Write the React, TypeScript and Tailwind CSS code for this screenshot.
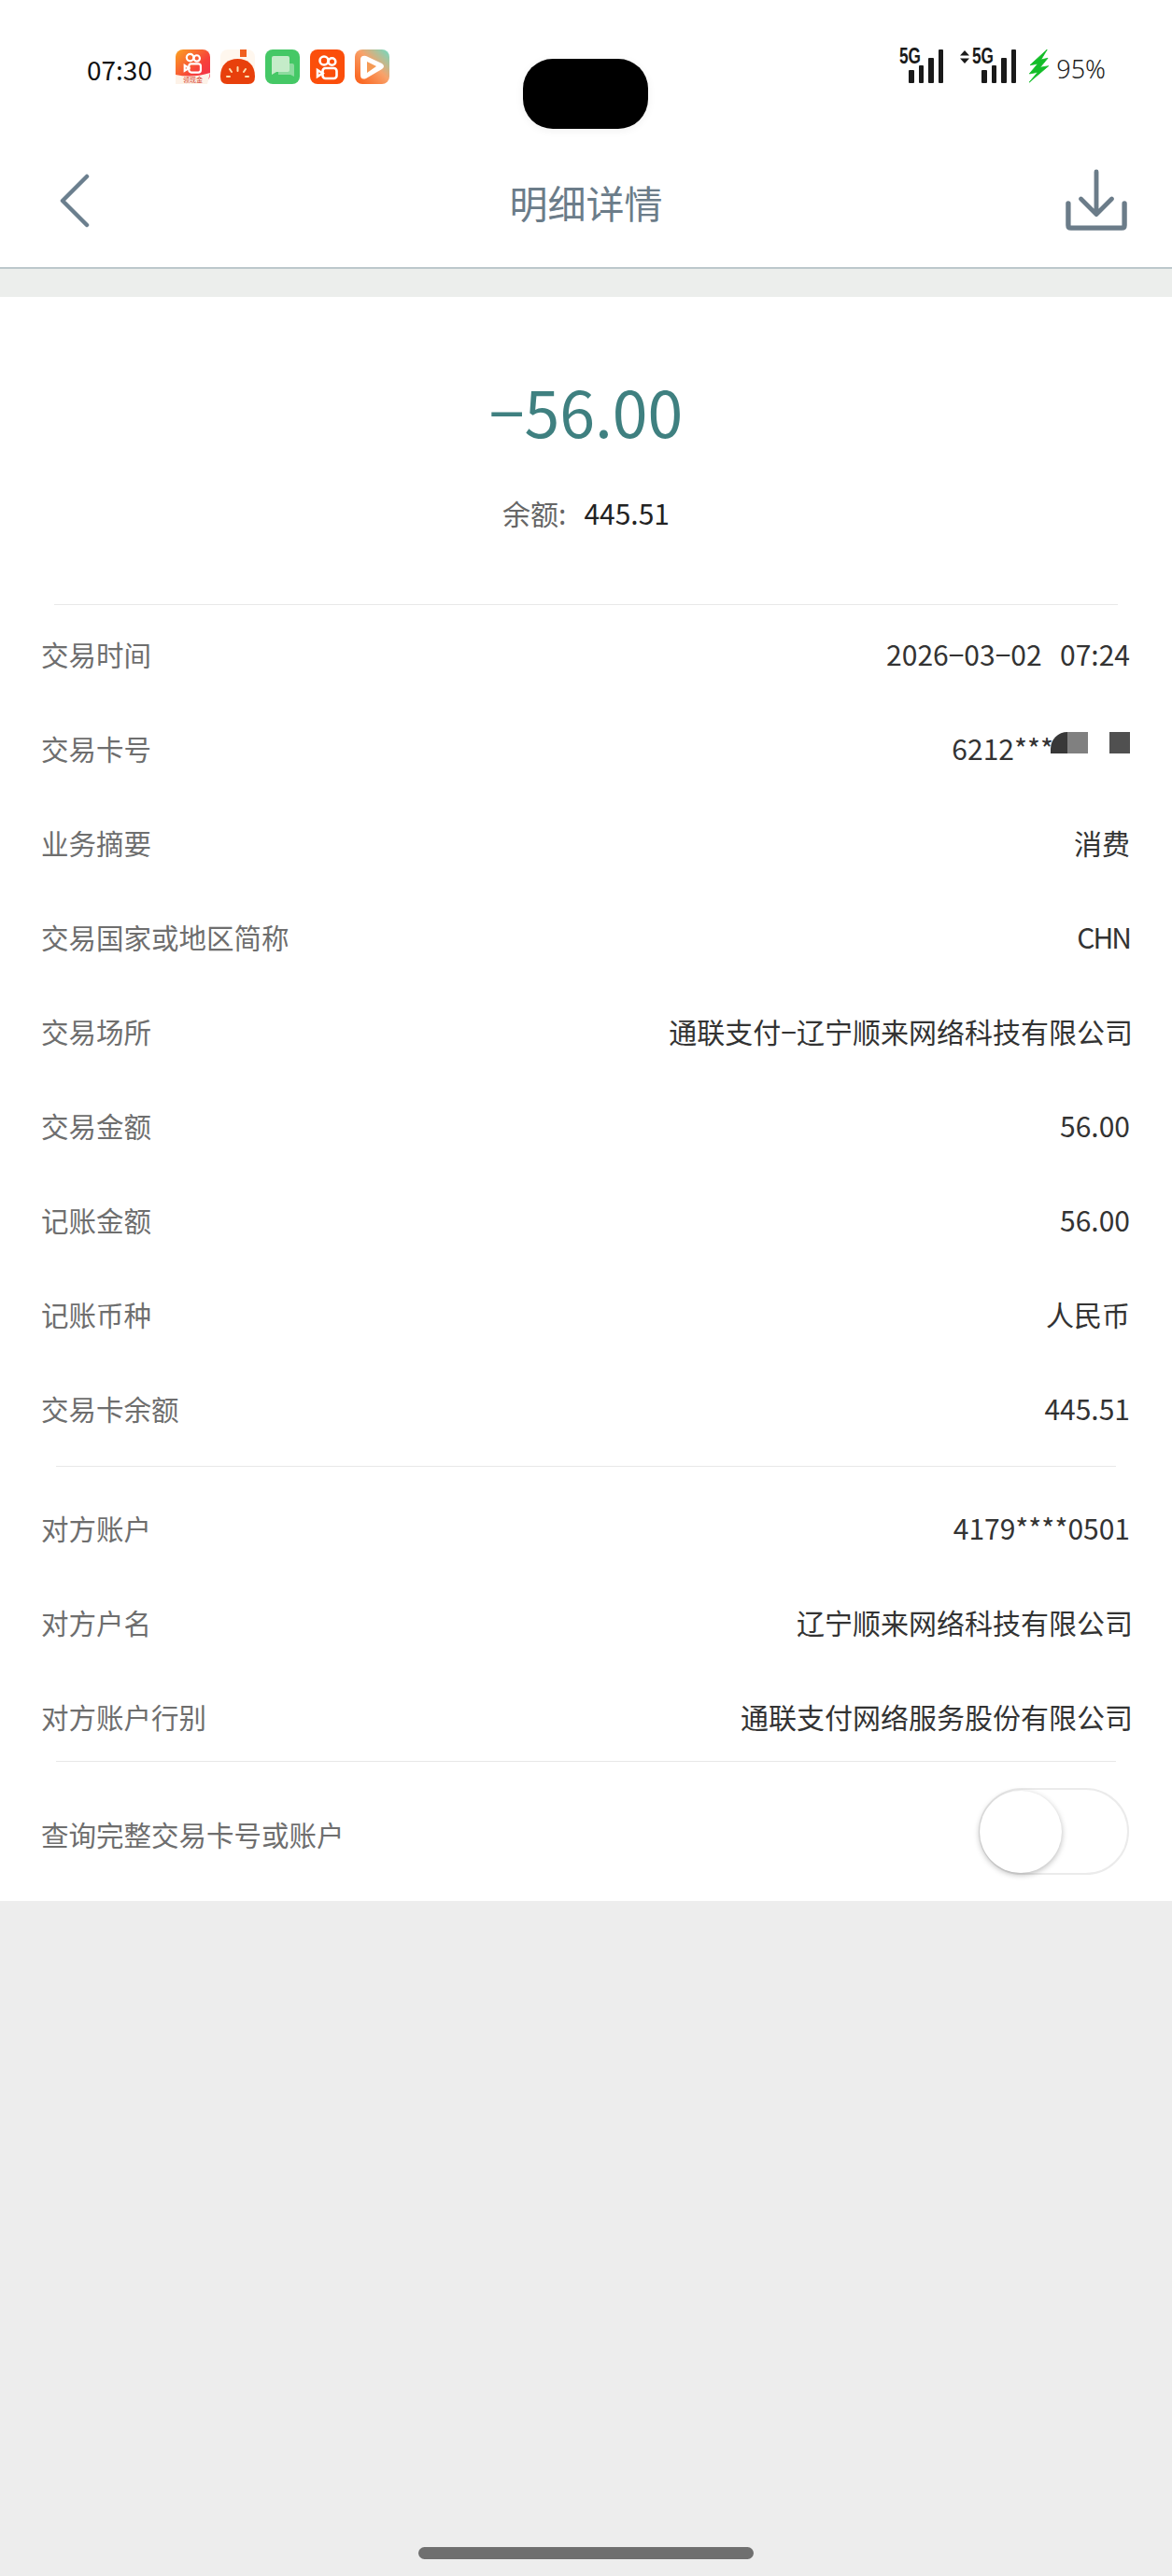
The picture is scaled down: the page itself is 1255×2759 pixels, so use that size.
import type { ReactNode } from 'react'

const CJK = 'font-["Noto_Sans_CJK_SC","Noto_Sans",sans-serif]'

const ROWS_TOP: [string, ReactNode][] = [
  ['交易时间', '2026−03−02  \u200907:24'],
  ['交易卡号', <CardNo key="card" />],
  ['业务摘要', '消费'],
  ['交易国家或地区简称', <span key="chn" className="tracking-[-2px]">CHN</span>],
  ['交易场所', '通联支付−辽宁顺来网络科技有限公司'],
  ['交易金额', '56.00'],
  ['记账金额', '56.00'],
  ['记账币种', '人民币'],
  ['交易卡余额', '445.51'],
]

const ROWS_BOTTOM: [string, string][] = [
  ['对方账户', '4179****0501'],
  ['对方户名', '辽宁顺来网络科技有限公司'],
  ['对方账户行别', '通联支付网络服务股份有限公司'],
]

function CardNo() {
  return (
    <div className="flex items-start h-[101px]">
      <span className="mt-[29px] leading-[42px] -mr-[3px]">6212***</span>
      <div className="mt-[33px] w-[18px] h-[23px] bg-[#383838] rounded-tl-[18px]" />
      <div className="mt-[33px] w-[22px] h-[23px] bg-[#808080]" />
      <div className="mt-[33px] ml-[23px] w-[22px] h-[23px] bg-[#505050]" />
    </div>
  )
}

function Row({ label, value }: { label: string; value: ReactNode }) {
  // company names sit a little further right than the numbers in the reference
  const company = typeof value === 'string' && value.endsWith('公司')
  return (
    <div className="flex items-center justify-between h-[101px] pl-[44px] pr-[45px]">
      <span className="text-[29.500px] text-[#6e6e6e]">{label}</span>
      <span className={`text-[30px] text-[#333333] whitespace-pre ${company ? '-mr-[3px]' : ''}`}>{value}</span>
    </div>
  )
}

function CameraGlyph() {
  return (
    <g fill="none" stroke="#fff" strokeWidth="2.600">
      <circle cx="15" cy="12" r="4.500" />
      <circle cx="23.500" cy="13" r="3.800" />
      <rect x="13.500" y="20" width="15" height="11" rx="3" />
      <path d="M13.500 25.500 8 22v7z" />
    </g>
  )
}

function AppIcons() {
  return (
    <div className="flex gap-[11px] ml-[25px]">
      <svg width="37" height="37" viewBox="0 0 37 37">
        <defs>
          <linearGradient id="a" x1="0" y1="0" x2="1" y2="1">
            <stop offset="0" stopColor="#fba321" />
            <stop offset="0.6" stopColor="#f7413a" />
            <stop offset="1" stopColor="#f02d50" />
          </linearGradient>
        </defs>
        <rect width="37" height="35" rx="8" fill="url(#a)" />
        <g transform="translate(3 -1.500) scale(.84)">
          <CameraGlyph />
        </g>
        <path d="M0 27q18 4 37-2l-3 12H0z" fill="#fdf2e8" />
        <text x="8" y="34.500" fontSize="7" fill="#d8402c">领现金</text>
      </svg>
      <svg width="37" height="37" viewBox="0 0 37 37">
        <rect width="37" height="37" fill="#fff7ee" rx="8" />
        <rect x="21" y="0" width="7" height="8" fill="#f0601f" />
        <path d="M0 29C0 16 8 10 18.500 10S37 16 37 29q0 8-7 8H7q-7 0-7-8" fill="#e8400c" />
        <path d="M18.500 19v4M10 21l2 3M27 21l-2 3M7 29h3M27 29h3" stroke="#fde0b0" strokeWidth="2" strokeLinecap="round" />
      </svg>
      <svg width="37" height="37" viewBox="0 0 37 37">
        <rect width="37" height="37" rx="8" fill="#45c866" />
        <path d="M14 15h15q2 0 2 2v12l-4-2H14z" fill="#8ddb9f" />
        <path d="M9 7h15q2 0 2 2v13q0 2-2 2H12l-5 3V9q0-2 2-2" fill="#c5ecc9" />
      </svg>
      <svg width="37" height="37" viewBox="0 0 37 37">
        <rect width="37" height="37" rx="8" fill="#fb4e0b" />
        <CameraGlyph />
      </svg>
      <svg width="37" height="37" viewBox="0 0 37 37">
        <defs>
          <linearGradient id="b" x1="0" y1="1" x2="1" y2="0">
            <stop offset="0" stopColor="#fb5a12" />
            <stop offset="0.55" stopColor="#f8a26a" />
            <stop offset="1" stopColor="#6ddcc4" />
          </linearGradient>
        </defs>
        <rect width="37" height="37" rx="8" fill="url(#b)" />
        <path d="M6 11q0-5 6-4l17 8q4 3 0 6L12 31q-6 2-6-4z" fill="#fff" />
        <path d="M13 13l10 5-10 7z" fill="#f59a55" />
      </svg>
    </div>
  )
}

function Signal({ arrows }: { arrows?: boolean }) {
  return (
    <div className="flex items-start">
      {arrows && (
        <svg width="10" height="14" viewBox="0 0 10 14" className="mt-[1px] mr-[3px]">
          <path d="M5 0l5 5.500H0zM5 14l5-5.500H0z" fill="#1a1a1a" />
        </svg>
      )}
      <div className="relative w-[47px] h-[36px]">
        <span className="absolute left-0 top-[-5px] origin-left scale-x-75 text-[23px] font-bold leading-[24px] text-[#1a1a1a] font-['Liberation_Sans',sans-serif]">5G</span>
        <div className="absolute bottom-0 right-0 flex items-end gap-[5px]">
          <div className="w-[5.500px] h-[14px] rounded-[1px] bg-[#1a1a1a]" />
          <div className="w-[5.500px] h-[19px] rounded-[1px] bg-[#1a1a1a]" />
          <div className="w-[5.500px] h-[27px] rounded-[1px] bg-[#1a1a1a]" />
          <div className="w-[5.500px] h-[36px] rounded-[1px] bg-[#1a1a1a]" />
        </div>
      </div>
    </div>
  )
}

export default function App() {
  return (
    <div className={`relative h-[2759px] flex flex-col bg-[#ededed] ${CJK}`}>
      {/* camera cutout */}
      <div className="absolute left-[560px] top-[63px] w-[134px] h-[75px] rounded-[32px] bg-black shadow-[0_2px_10px_rgba(0,0,0,0.06)]" />

      <div className="bg-white border-b-2 border-[#bcc8cc]">
        <div className="flex items-start justify-between h-[164px] pt-[53px] pl-[93px] pr-[71px]">
          <div className="flex items-start">
            <span className="text-[28px] leading-[46px] -mt-[2px] text-[#111111]">07:30</span>
            <AppIcons />
          </div>
          <div className="flex items-end h-[36px]">
            <Signal />
            <div className="ml-[18px]">
              <Signal arrows />
            </div>
            <svg width="21" height="36" viewBox="0 0 21 36" className="ml-[14px]">
              <path d="M19.300 0 1 16.700l8.300-1.400L.3 26l9-1.700L0 35.300l20.700-17.600-9 1.600L20 9.300 12.700 11z" fill="#12bd27" stroke="#12bd27" strokeWidth="0.800" />
            </svg>
            <span className="text-[27px] leading-[40px] text-[#222222] font-['Noto_Sans',sans-serif] font-light ml-[8px] -mb-[5px]">95%</span>
          </div>
        </div>
        <div className="relative flex items-center justify-center h-[122px] pb-[17px]">
          <svg width="36" height="58" viewBox="0 0 36 58" className="absolute left-[62px] top-[22px]" fill="none">
            <path d="M31 3 5 29l26 26" stroke="#6b7f8e" strokeWidth="4.500" strokeLinecap="round" strokeLinejoin="round" />
          </svg>
          <span className="text-[41px] text-[#6b7c89]">明细详情</span>
          <svg width="66" height="66" viewBox="0 0 68 68" className="absolute right-[48px] top-[17px]" fill="none" stroke="#6b7c89" strokeLinecap="round" strokeLinejoin="round">
            <path d="M34 3v46M17 33l17 17 17-17" strokeWidth="5" />
            <path d="M3 38v24q0 3 3 3h56q3 0 3-3V38" strokeWidth="5.500" />
          </svg>
        </div>
      </div>

      <div className="h-[30px] bg-[#eceeec]" />

      <div className="bg-white">
        <div className="flex flex-col items-center h-[329px] pt-[75px]">
          <div className="text-[68px] leading-[94px] text-[#3f8080]">−56.00</div>
          <div className="flex gap-[19px] mt-[41px] text-[30px] leading-[42px]">
            <span className="text-[#666666]">余额:</span>
            <span className="text-[#222222]">445.51</span>
          </div>
        </div>
        <div className="mx-[58px] h-[1px] bg-[#e8e8e8]" />
        <div className="pt-[2px]">
          {ROWS_TOP.map(([label, value]) => (
            <Row key={label} label={label} value={value} />
          ))}
        </div>
        <div className="mx-[60px] mt-[11px] h-[1px] bg-[#e8e8e8]" />
        <div className="pt-[15px]">
          {ROWS_BOTTOM.map(([label, value]) => (
            <Row key={label} label={label} value={value} />
          ))}
        </div>
        <div className="mx-[60px] -mt-[3px] h-[1px] bg-[#e8e8e8]" />
        <div className="flex items-center justify-between h-[149px] pl-[44px] pr-[46px]">
          <span className="text-[29.500px] text-[#6e6e6e] mt-[6px]">查询完整交易卡号或账户</span>
          <div className="relative w-[161px] h-[93px] rounded-full bg-white border-[2px] border-[#ebebeb]">
            <div className="absolute left-[-1px] top-[1px] w-[88px] h-[88px] rounded-full bg-white shadow-[0_2px_6px_rgba(0,0,0,0.28)]" />
          </div>
        </div>
      </div>

      <div className="flex-1 flex items-end justify-center pb-[18px]">
        <div className="w-[359px] h-[13px] rounded-full bg-[#6f6f6f]" />
      </div>
    </div>
  )
}
